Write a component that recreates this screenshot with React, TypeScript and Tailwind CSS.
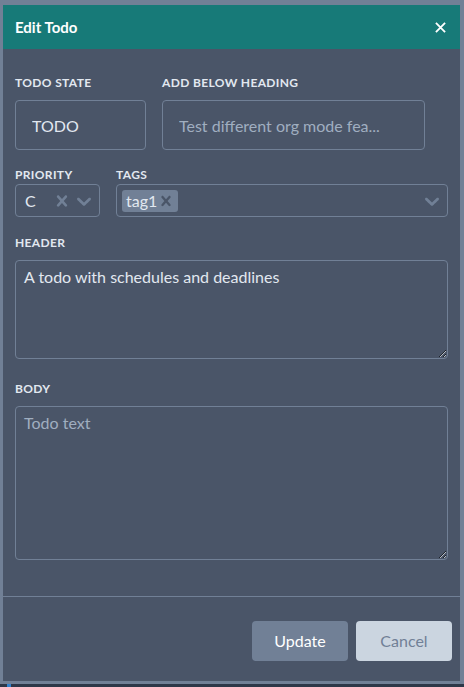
import React from 'react';

const CROSS =
  'M14.348 14.849c-0.469 0.469-1.229 0.469-1.697 0l-2.651-3.030-2.651 3.029c-0.469 0.469-1.229 0.469-1.697 0-0.469-0.469-0.469-1.229 0-1.697l2.758-3.15-2.759-3.152c-0.469-0.469-0.469-1.228 0-1.697s1.228-0.469 1.697 0l2.652 3.031 2.651-3.031c0.469-0.469 1.228-0.469 1.697 0s0.469 1.229 0 1.697l-2.758 3.152 2.758 3.15c0.469 0.469 0.469 1.229 0 1.698z';
const CHEVRON =
  'M4.516 7.548c0.436-0.446 1.043-0.481 1.576 0l3.908 3.747 3.908-3.747c0.533-0.481 1.141-0.446 1.574 0 0.436 0.445 0.408 1.197 0 1.615-0.406 0.418-4.695 4.502-4.695 4.502-0.217 0.223-0.502 0.335-0.787 0.335s-0.57-0.112-0.789-0.335c0 0-4.287-4.084-4.695-4.502s-0.436-1.17 0-1.615z';

const Icon: React.FC<{ d: string; className?: string }> = ({ d, className }) => (
  <svg viewBox="0 0 20 20" className={className} fill="currentColor" aria-hidden="true">
    <path d={d} />
  </svg>
);

const Label: React.FC<{ children: React.ReactNode; className?: string }> = ({ children, className }) => (
  <label className={`block text-[12px] leading-[14px] font-bold uppercase tracking-[0.03em] text-[#E2E8F0] ${className ?? ''}`}>
    {children}
  </label>
);

export default function App() {
  return (
    <div
      className="w-[464px] h-[687px] bg-[#718096] flex flex-col overflow-hidden"
      style={{ fontFamily: 'Lato, "Noto Sans", sans-serif' }}
    >
      <div className="flex-1 pt-[5px] pl-[3px] pr-[4px] pb-[3px]">
        <div className="h-[676px] bg-[#4A5568] flex flex-col">
          {/* Header */}
          <header className="h-[44px] bg-[#177A78] pl-3 pr-[14px] flex items-center justify-between">
            <h2 className="text-[15px] font-bold text-white">Edit Todo</h2>
            <button className="text-white">
              <svg viewBox="0 0 12 12" className="w-[11px] h-[11px]" stroke="currentColor" strokeWidth="2">
                <path d="M1 1l10 10M11 1L1 11" />
              </svg>
            </button>
          </header>

          {/* Body */}
          <div className="h-[547px] px-3 pt-[27px]">
            <div className="flex gap-4">
              <div className="w-[131px]">
                <Label className="mb-[10px]">Todo state</Label>
                <input
                  readOnly
                  defaultValue="TODO"
                  className="w-full h-[50px] rounded-[4px] border border-[#718096] bg-transparent pl-4 text-[16px] text-[#E2E8F0] outline-none"
                />
              </div>
              <div className="w-[263px]">
                <Label className="mb-[10px]">Add below heading</Label>
                <input
                  readOnly
                  placeholder="Test different org mode fea..."
                  className="w-full h-[50px] rounded-[4px] border border-[#718096] bg-transparent pl-4 text-[16px] text-[#E2E8F0] placeholder:text-[#A0AEC0] outline-none"
                />
              </div>
            </div>

            <div className="flex gap-4 mt-[18px]">
              <div className="w-[85px]">
                <Label className="mb-[2px]">Priority</Label>
                <div className="h-[33px] rounded-[4px] border border-[#718096] flex items-center pl-[9px] pr-[3px]">
                  <span className="flex-1 text-[16px] text-[#E2E8F0]">C</span>
                  <Icon d={CROSS} className="w-[22px] h-[22px] text-[#718096]" />
                  <Icon d={CHEVRON} className="w-[24px] h-[24px] -ml-[1px] text-[#718096]" />
                </div>
              </div>
              <div className="flex-1">
                <Label className="mb-[2px]">Tags</Label>
                <div className="h-[33px] rounded-[4px] border border-[#718096] flex items-center pl-[5px] pr-[3px]">
                  <div className="flex-1">
                    <span className="inline-flex items-center h-[22px] rounded-[3px] bg-[#718096] pl-[4px] pr-[2px]">
                      <span className="text-[16px] leading-none text-[#E2E8F0]">tag1</span>
                      <Icon d={CROSS} className="w-[20px] h-[20px] -ml-[1px] text-[#4A5568]" />
                    </span>
                  </div>
                  <Icon d={CHEVRON} className="w-[24px] h-[24px] text-[#718096]" />
                </div>
              </div>
            </div>

            <Label className="mt-[19px] mb-[10px]">Header</Label>
            <textarea
              readOnly
              defaultValue="A todo with schedules and deadlines"
              className="block w-full h-[99px] rounded-[4px] border border-[#718096] bg-transparent px-2 py-1 text-[16px] text-[#E2E8F0] outline-none"
            />

            <Label className="mt-[23px] mb-[10px]">Body</Label>
            <textarea
              readOnly
              placeholder="Todo text"
              className="block w-full h-[154px] rounded-[4px] border border-[#718096] bg-transparent px-2 py-1 text-[16px] text-[#E2E8F0] placeholder:text-[#A0AEC0] outline-none"
            />
          </div>

          {/* Footer */}
          <footer className="flex-1 border-t border-[#718096] pt-6 pr-2 flex justify-end gap-2">
            <button className="w-[96px] h-[40px] rounded-[4px] bg-[#718096] text-[16px] text-white">Update</button>
            <button className="w-[96px] h-[40px] rounded-[4px] bg-[#CBD5E0] text-[16px] text-[#718096]">Cancel</button>
          </footer>
        </div>
      </div>
      <div className="h-[3px] bg-[#2D3748] flex">
        <div className="ml-[7px] w-[4px] bg-[#3182CE]" />
      </div>
    </div>
  );
}
